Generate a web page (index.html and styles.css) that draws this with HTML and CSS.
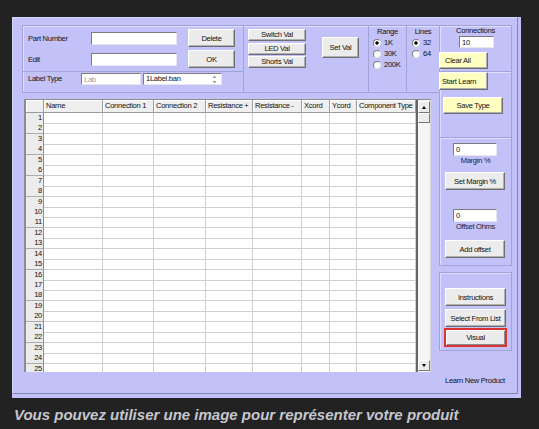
FILE: index.html
```html
<!DOCTYPE html>
<html>
<head>
    <link rel="stylesheet" href="styles.css">
</head>
<body>
    <div class="window">
        <div class="form">
            <div class="left">
                <div class="top-frame">
                    <div class="sec-part">
                        <div class="part-rows">
                            <div class="row">
                                <span class="lbl">Part Number</span>
                                <input class="field part-field" type="text">
                                <button class="btn btn-wide">Delete</button>
                            </div>
                            <div class="row">
                                <span class="lbl">Edit</span>
                                <input class="field part-field" type="text">
                                <button class="btn btn-wide">OK</button>
                            </div>
                        </div>
                        <div class="label-row">
                            <span class="lbl lbl-type">Label Type</span>
                            <input class="field lab-field" type="text" value="Lab">
                            <div class="field combo">
                                <span>1Label.ban</span>
                                <svg width="5" height="9" viewBox="0 0 5 9">
                                    <path d="M2.5 0.5 L4.5 3 L0.5 3 Z" fill="#a0a0a0"/>
                                    <path d="M0.5 6 L4.5 6 L2.5 8.5 Z" fill="#a0a0a0"/>
                                </svg>
                            </div>
                        </div>
                    </div>

                    <div class="sec-vals">
                        <div class="val-stack">
                            <button class="btn btn-small">Switch Val</button>
                            <button class="btn btn-small">LED Val</button>
                            <button class="btn btn-small">Shorts Val</button>
                        </div>
                        <button class="btn set-val">Set Val</button>
                    </div>

                    <div class="sec-radio range">
                        <div class="cap">Range</div>
                        <div class="radios">
                            <div class="radio on">1K</div>
                            <div class="radio">30K</div>
                            <div class="radio">200K</div>
                        </div>
                    </div>

                    <div class="sec-radio lines">
                        <div class="cap">Lines</div>
                        <div class="radios">
                            <div class="radio on">32</div>
                            <div class="radio">64</div>
                        </div>
                    </div>
                </div>

                <div class="grid">
                    <div class="sheet">
                        <div class="head">
                            <span></span><span>Name</span><span>Connection 1</span><span>Connection 2</span><span>Resistance +</span><span>Resistance -</span><span>Xcord</span><span>Ycord</span><span>Component Type</span>
                        </div>
                        <div class="gr"><span class="rn">1</span><span></span><span></span><span></span><span></span><span></span><span></span><span></span><span></span></div>
                        <div class="gr"><span class="rn">2</span><span></span><span></span><span></span><span></span><span></span><span></span><span></span><span></span></div>
                        <div class="gr"><span class="rn">3</span><span></span><span></span><span></span><span></span><span></span><span></span><span></span><span></span></div>
                        <div class="gr"><span class="rn">4</span><span></span><span></span><span></span><span></span><span></span><span></span><span></span><span></span></div>
                        <div class="gr"><span class="rn">5</span><span></span><span></span><span></span><span></span><span></span><span></span><span></span><span></span></div>
                        <div class="gr"><span class="rn">6</span><span></span><span></span><span></span><span></span><span></span><span></span><span></span><span></span></div>
                        <div class="gr"><span class="rn">7</span><span></span><span></span><span></span><span></span><span></span><span></span><span></span><span></span></div>
                        <div class="gr"><span class="rn">8</span><span></span><span></span><span></span><span></span><span></span><span></span><span></span><span></span></div>
                        <div class="gr"><span class="rn">9</span><span></span><span></span><span></span><span></span><span></span><span></span><span></span><span></span></div>
                        <div class="gr"><span class="rn">10</span><span></span><span></span><span></span><span></span><span></span><span></span><span></span><span></span></div>
                        <div class="gr"><span class="rn">11</span><span></span><span></span><span></span><span></span><span></span><span></span><span></span><span></span></div>
                        <div class="gr"><span class="rn">12</span><span></span><span></span><span></span><span></span><span></span><span></span><span></span><span></span></div>
                        <div class="gr"><span class="rn">13</span><span></span><span></span><span></span><span></span><span></span><span></span><span></span><span></span></div>
                        <div class="gr"><span class="rn">14</span><span></span><span></span><span></span><span></span><span></span><span></span><span></span><span></span></div>
                        <div class="gr"><span class="rn">15</span><span></span><span></span><span></span><span></span><span></span><span></span><span></span><span></span></div>
                        <div class="gr"><span class="rn">16</span><span></span><span></span><span></span><span></span><span></span><span></span><span></span><span></span></div>
                        <div class="gr"><span class="rn">17</span><span></span><span></span><span></span><span></span><span></span><span></span><span></span><span></span></div>
                        <div class="gr"><span class="rn">18</span><span></span><span></span><span></span><span></span><span></span><span></span><span></span><span></span></div>
                        <div class="gr"><span class="rn">19</span><span></span><span></span><span></span><span></span><span></span><span></span><span></span><span></span></div>
                        <div class="gr"><span class="rn">20</span><span></span><span></span><span></span><span></span><span></span><span></span><span></span><span></span></div>
                        <div class="gr"><span class="rn">21</span><span></span><span></span><span></span><span></span><span></span><span></span><span></span><span></span></div>
                        <div class="gr"><span class="rn">22</span><span></span><span></span><span></span><span></span><span></span><span></span><span></span><span></span></div>
                        <div class="gr"><span class="rn">23</span><span></span><span></span><span></span><span></span><span></span><span></span><span></span><span></span></div>
                        <div class="gr"><span class="rn">24</span><span></span><span></span><span></span><span></span><span></span><span></span><span></span><span></span></div>
                        <div class="gr"><span class="rn">25</span><span></span><span></span><span></span><span></span><span></span><span></span><span></span><span></span></div>
                    </div>
                    <div class="scroll">
                        <div class="sb-btn sb-up"></div>
                        <div class="sb-btn sb-thumb"></div>
                        <div class="sb-track"></div>
                        <div class="sb-btn sb-down"></div>
                    </div>
                </div>
            </div>

            <div class="right">
                <div class="frame f-conn">
                    <div class="cap">Connections</div>
                    <input class="field conn-field" type="text" value="10">
                    <button class="btn btn-yellow clear-all">Clear All</button>
                </div>
                <div class="frame f-learn">
                    <button class="btn btn-yellow start-learn">Start Learn</button>
                    <button class="btn btn-yellow save-type">Save Type</button>
                </div>
                <div class="frame f-margin">
                    <input class="field num-field" type="text" value="0">
                    <div class="note">Margin %</div>
                    <button class="btn btn-side set-margin">Set Margin %</button>
                    <input class="field num-field offset-field" type="text" value="0">
                    <div class="note">Offset Ohms</div>
                    <button class="btn btn-side add-offset">Add offset</button>
                </div>
                <div class="frame f-info">
                    <button class="btn btn-side instructions">Instructions</button>
                    <button class="btn btn-side select-list">Select From List</button>
                    <button class="btn btn-side visual">Visual</button>
                </div>
                <div class="learn-new">Learn New Product</div>
            </div>
        </div>
    </div>

    <p class="caption">Vous pouvez utiliser une image pour représenter votre produit</p>
</body>
</html>
```

FILE: styles.css
```css
body {
    margin: 0;
    background-color: #222222;
    font-family: "Liberation Sans", Arial, sans-serif;
    font-size: 7.6px;
    letter-spacing: -0.3px;
    color: #111111;
}

.window {
    margin: 17px 0 0 12px;
    width: 509px;
    height: 381px;
    background: #c2c2f9;
}

.form {
    display: flex;
    box-sizing: border-box;
    width: 506px;
    height: 377px;
    padding: 7px 0 0 9px;
    border-top: 1px solid #d6d6ff;
    border-left: 1px solid #d6d6ff;
    border-right: 1px solid #8585a8;
    border-bottom: 1px solid #8585a8;
}

.left {
    width: 417px;
}

/* shared controls */

.btn {
    box-sizing: border-box;
    padding: 0;
    font: inherit;
    letter-spacing: inherit;
    color: #111111;
    background: #ececec;
    border: 1px solid;
    border-color: #ffffff #6e6e6e #6e6e6e #ffffff;
    box-shadow: inset -1px -1px 0 #b0b0b0;
    cursor: pointer;
}

.btn-yellow {
    background: #ffffc2;
}

.field {
    box-sizing: border-box;
    padding: 0 2px;
    font: inherit;
    letter-spacing: inherit;
    color: #111111;
    background: #ffffff;
    border: 1px solid;
    border-color: #7c7c7c #e6e6f0 #e6e6f0 #7c7c7c;
    outline: none;
}

.cap {
    height: 11px;
    line-height: 11px;
    text-align: center;
}

/* top frame */

.top-frame {
    display: flex;
    box-sizing: border-box;
    height: 68px;
    border: 1px solid #a2a2da;
    border-right: none;
    box-shadow: inset 1px 1px 0 #dedeff;
}

.sec-part {
    box-sizing: border-box;
    width: 221px;
    border-right: 1px solid #a2a2da;
}

.part-rows {
    display: flex;
    flex-direction: column;
    gap: 3px;
    box-sizing: border-box;
    height: 46px;
    padding: 3px 0 0 5px;
    border-bottom: 1px solid #a2a2da;
}

.row {
    display: flex;
    align-items: center;
    height: 18px;
}

.lbl {
    width: 63px;
}

.part-field {
    width: 86px;
    height: 13px;
    margin-right: 11px;
}

.btn-wide {
    width: 47px;
    height: 18px;
}

.label-row {
    display: flex;
    align-items: center;
    padding: 1px 0 0 5px;
}

.lbl-type {
    width: 53px;
    line-height: 12px;
}

.lab-field {
    width: 60px;
    height: 12px;
    margin-right: 2px;
    color: #9a9a9a;
}

.combo {
    display: flex;
    align-items: center;
    justify-content: space-between;
    width: 79px;
    height: 12px;
    padding: 0 4px 0 2px;
    line-height: 10px;
}

.sec-vals {
    display: flex;
    box-sizing: border-box;
    width: 125px;
    padding: 3px 0 0 4px;
    border-right: 1px solid #a2a2da;
}

.val-stack {
    display: flex;
    flex-direction: column;
    gap: 1.5px;
}

.btn-small {
    width: 58px;
    height: 12px;
    line-height: 10px;
}

.set-val {
    width: 37px;
    height: 21px;
    margin: 8px 0 0 16px;
}

.sec-radio {
    box-sizing: border-box;
}

.range {
    width: 38px;
    border-right: 1px solid #a2a2da;
}

.range .radios {
    padding-left: 4px;
}

.lines {
    width: 32px;
}

.lines .radios {
    padding-left: 5px;
}

.radio {
    display: flex;
    align-items: center;
    gap: 3px;
    height: 11px;
}

.radio::before {
    content: "";
    box-sizing: border-box;
    width: 8px;
    height: 8px;
    border-radius: 50%;
    border: 1px solid;
    border-color: #808080 #e4e4e4 #e4e4e4 #808080;
    background: #ffffff;
}

.radio.on::before {
    background: radial-gradient(circle, #000000 0 1.4px, #ffffff 1.9px);
}

/* grid */

.grid {
    display: flex;
    box-sizing: border-box;
    width: 407px;
    height: 273px;
    margin: 6px 0 0 2px;
    border-top: 1px solid #8c8c8c;
    border-left: 2px solid #8c8c8c;
    background: #ffffff;
}

.sheet {
    box-sizing: border-box;
    width: 392px;
    overflow: hidden;
    border-right: 2px solid #666666;
}

.head,
.gr {
    display: grid;
    grid-template-columns: 18px 59px 51px 52px 47px 49px 28px 27px 59px;
}

.head {
    height: 13px;
}

.head span {
    box-sizing: border-box;
    padding-left: 2px;
    line-height: 12px;
    white-space: nowrap;
    overflow: hidden;
    background: #efefef;
    border-right: 1px solid #9c9c9c;
    border-bottom: 1px solid #9c9c9c;
    box-shadow: inset 1px 1px 0 #ffffff;
}

.gr {
    height: 10.45px;
}

.gr span {
    box-sizing: border-box;
    border-right: 1px solid #d0d0d0;
    border-bottom: 1px solid #d0d0d0;
}

.gr .rn {
    padding-right: 1px;
    line-height: 10px;
    text-align: right;
    background: #ececec;
    border-right-color: #8c8c8c;
    border-bottom-color: #ababab;
}

.scroll {
    display: flex;
    flex-direction: column;
    box-sizing: border-box;
    width: 13px;
    border-right: 1px solid #d8d8d8;
    background: #f5f5f5;
}

.sb-btn {
    display: flex;
    align-items: center;
    justify-content: center;
    box-sizing: border-box;
    background: #ececec;
    border: 1px solid;
    border-color: #ffffff #777777 #777777 #ffffff;
}

.sb-up {
    height: 12px;
    margin-top: 1px;
}

.sb-up::after {
    content: "";
    border-left: 2.5px solid transparent;
    border-right: 2.5px solid transparent;
    border-bottom: 3px solid #000000;
}

.sb-thumb {
    height: 10px;
}

.sb-track {
    flex: 1;
}

.sb-down {
    height: 11px;
    margin-bottom: 1px;
}

.sb-down::after {
    content: "";
    border-left: 2.5px solid transparent;
    border-right: 2.5px solid transparent;
    border-top: 3px solid #000000;
}

/* right column */

.right {
    width: 73px;
}

.frame {
    display: flex;
    flex-direction: column;
    align-items: flex-start;
    box-sizing: border-box;
    border: 1px solid #a2a2da;
    border-bottom: none;
    box-shadow: inset 1px 1px 0 #dedeff;
}

.frame .cap {
    align-self: stretch;
    height: 10px;
    line-height: 10px;
}

.f-conn {
    height: 46px;
}

.conn-field {
    width: 35px;
    height: 12px;
    margin-left: 19px;
}

.clear-all {
    width: 49px;
    height: 17px;
    margin: 4px 0 0 -1px;
    padding-left: 5px;
    text-align: left;
}

.f-learn {
    height: 66px;
}

.start-learn {
    width: 49px;
    height: 18px;
    margin-left: -1px;
    padding-left: 2px;
    text-align: left;
}

.save-type {
    width: 60px;
    height: 17px;
    margin: 7px 0 0 3px;
}

.f-margin {
    height: 129px;
    border-bottom: 1px solid #a2a2da;
}

.num-field {
    width: 44px;
    height: 13px;
    margin: 5px 0 0 13px;
}

.offset-field {
    margin-top: 19px;
}

.note {
    align-self: stretch;
    line-height: 10px;
    text-align: center;
    color: #1a1a40;
}

.btn-side {
    width: 60px;
    height: 18px;
    margin-left: 5px;
}

.set-margin {
    margin-top: 6px;
}

.add-offset {
    margin-top: 8px;
}

.f-info {
    height: 79px;
    margin-top: 6px;
    border-bottom: 1px solid #a2a2da;
}

.instructions {
    width: 61px;
    margin-top: 15px;
}

.select-list {
    width: 61px;
    margin-top: 3px;
}

.visual {
    width: 63px;
    height: 19px;
    margin: 1px 0 0 4px;
    border: 2px solid #d83434;
    box-shadow: inset 1px 1px 0 #ffffff, inset -1px -1px 0 #8a8a8a;
}

.learn-new {
    margin: 25px 0 0 6px;
    line-height: 10px;
}

/* caption under the window */

.caption {
    margin: 9px 0 0 14px;
    font-size: 15px;
    font-weight: bold;
    font-style: italic;
    line-height: 16px;
    letter-spacing: 0;
    color: #c6c6ce;
}
```
